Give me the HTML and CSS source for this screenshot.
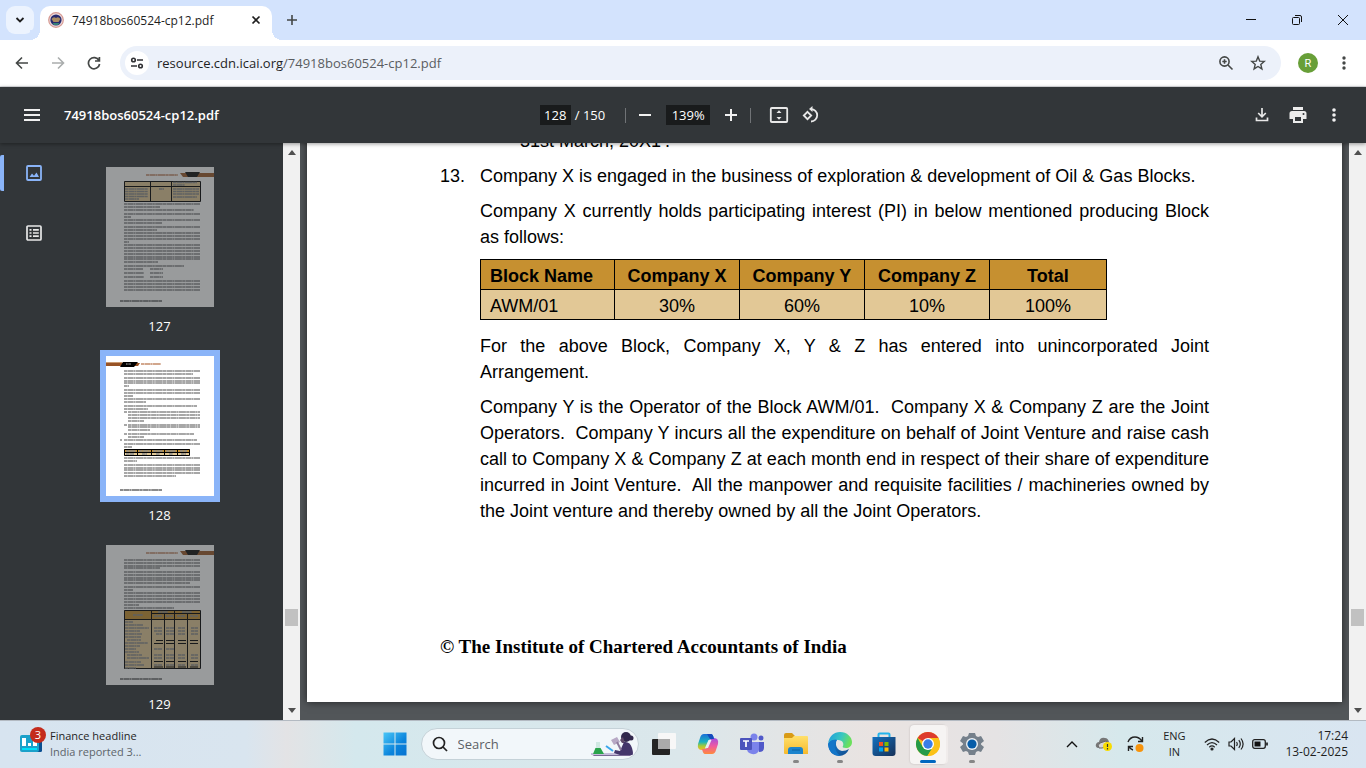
FILE: index.html
```html
<!DOCTYPE html>
<html lang="en">
<head>
    <meta charset="UTF-8">
    <meta name="viewport" content="width=device-width, initial-scale=1.0">
    <title>74918bos60524-cp12.pdf</title>
    <link rel="stylesheet" href="styles.css">
</head>
<body>

    <!-- Tab strip -->
    <header class="tab-strip">
        <button class="tab-search" aria-label="Search tabs">
            <svg width="10" height="10" viewBox="0 0 10 10"><path d="M1.500 3L5 6.500L8.500 3" fill="none" stroke="#1f1f1f" stroke-width="1.800"/></svg>
        </button>
        <div class="tab">
            <svg width="16" height="16" viewBox="0 0 16 16">
                <circle cx="8" cy="8" r="7.300" fill="#ead9dc" stroke="#d79a92" stroke-width="1.200"/>
                <circle cx="8" cy="8" r="5.600" fill="#26296e"/>
                <path d="M3.500 7q2-3 4.500-1q2.500-2 4.500 1l-2 3H5.500z" fill="#a98b62"/>
                <path d="M4.500 11h7l-1.500 2h-4z" fill="#358078"/>
            </svg>
            <span class="tab-title">74918bos60524-cp12.pdf</span>
            <button class="icon-btn" aria-label="Close tab">
                <svg width="10" height="10" viewBox="0 0 10 10"><path d="M1.500 1.500l7 7M8.500 1.500l-7 7" stroke="#1f1f1f" stroke-width="1.700"/></svg>
            </button>
        </div>
        <button class="icon-btn new-tab" aria-label="New tab">
            <svg width="12" height="12" viewBox="0 0 12 12"><path d="M6 1v10M1 6h10" stroke="#444746" stroke-width="1.600"/></svg>
        </button>
        <div class="window-buttons">
            <button aria-label="Minimize"><svg width="12" height="12" viewBox="0 0 12 12"><path d="M1 5.500h10" stroke="#111"/></svg></button>
            <button aria-label="Restore"><svg width="12" height="12" viewBox="0 0 12 12" fill="none" stroke="#111"><rect x="1.500" y="3.500" width="7" height="7" rx="1"/><path d="M4 1.500h5q1.500 0 1.500 1.500v5"/></svg></button>
            <button aria-label="Close"><svg width="12" height="12" viewBox="0 0 12 12"><path d="M1 1l10 10M11 1L1 11" stroke="#111"/></svg></button>
        </div>
    </header>

    <!-- Address bar -->
    <div class="nav-bar">
        <button class="icon-btn" aria-label="Back"><svg width="14" height="14" viewBox="0 0 14 14" fill="none" stroke="#444746" stroke-width="1.600"><path d="M13 7H2M7 1.500L1.500 7L7 12.500"/></svg></button>
        <button class="icon-btn" aria-label="Forward"><svg width="14" height="14" viewBox="0 0 14 14" fill="none" stroke="#aaadad" stroke-width="1.600"><path d="M1 7h11M7 1.500L12.500 7L7 12.500"/></svg></button>
        <button class="icon-btn" aria-label="Reload"><svg width="14" height="14" viewBox="0 0 14 14" fill="none" stroke="#444746" stroke-width="1.700"><path d="M12 4.500A5.600 5.600 0 1 0 12.600 8M12.400 1v4H8"/></svg></button>
        <div class="omnibox">
            <button class="site-info" aria-label="View site information">
                <svg width="14" height="12" viewBox="0 0 14 12" fill="none" stroke="#303134" stroke-width="1.600"><circle cx="3.500" cy="3" r="1.800"/><path d="M7 3h6M1 9h6"/><circle cx="10.500" cy="9" r="1.800"/></svg>
            </button>
            <a class="url" href="#">resource.cdn.icai.org<span>/74918bos60524-cp12.pdf</span></a>
            <button class="icon-btn" aria-label="Zoom"><svg width="16" height="16" viewBox="0 0 16 16" fill="none" stroke="#444746" stroke-width="1.600"><circle cx="6.500" cy="6.500" r="4.600"/><path d="M10 10l4.500 4.500M6.500 4.300v4.400M4.300 6.500h4.400"/></svg></button>
            <button class="icon-btn" aria-label="Bookmark"><svg width="16" height="16" viewBox="0 0 16 16" fill="none" stroke="#444746" stroke-width="1.400"><path d="M8 1.800l1.700 4.300 4.600.3-3.500 3 1.100 4.500L8 11.500l-3.900 2.400 1.100-4.500-3.500-3 4.600-.3z"/></svg></button>
        </div>
        <button class="avatar" aria-label="Profile">R</button>
        <button class="icon-btn" aria-label="Menu"><svg width="4" height="16" viewBox="0 0 4 16" fill="#444746"><circle cx="2" cy="3" r="1.700"/><circle cx="2" cy="8" r="1.700"/><circle cx="2" cy="13" r="1.700"/></svg></button>
    </div>

    <!-- PDF toolbar -->
    <div class="pdf-toolbar">
        <div class="pdf-name">
            <button class="icon-btn" aria-label="Toggle sidebar"><svg width="16" height="12" viewBox="0 0 16 12"><path d="M0 1h16M0 6h16M0 11h16" stroke="#f1f1f1" stroke-width="2"/></svg></button>
            <span>74918bos60524-cp12.pdf</span>
        </div>
        <div class="pdf-controls">
            <input class="page-input" aria-label="Page number" value="128">
            <span class="page-total">/ 150</span>
            <span class="separator"></span>
            <button class="icon-btn" aria-label="Zoom out"><svg width="12" height="12" viewBox="0 0 12 12"><path d="M0 6h12" stroke="#f1f1f1" stroke-width="2"/></svg></button>
            <input class="zoom-input" aria-label="Zoom level" value="139%">
            <button class="icon-btn" aria-label="Zoom in"><svg width="12" height="12" viewBox="0 0 12 12"><path d="M0 6h12M6 0v12" stroke="#f1f1f1" stroke-width="2"/></svg></button>
            <span class="separator"></span>
            <button class="icon-btn" aria-label="Fit to page"><svg width="20" height="16" viewBox="0 0 20 16"><rect x="1.800" y="1" width="16.400" height="14" rx="1" fill="none" stroke="#e8e8e8" stroke-width="1.800"/><path d="M7.500 6L10 3.200L12.500 6zM7.500 10L10 12.800L12.500 10z" fill="#e8e8e8"/><path d="M10 5v1M10 10v1" stroke="#e8e8e8" stroke-width="2"/></svg></button>
            <button class="icon-btn" aria-label="Rotate"><svg width="18" height="18" viewBox="0 0 18 18" fill="none" stroke="#e8e8e8" stroke-width="1.800"><path d="M5.500 5.800l3.700 3.700-3.700 3.700-3.700-3.700zM9 3.100a6.200 6.200 0 1 1 0 12.400"/><path d="M10.500 0v6L7 3z" fill="#e8e8e8" stroke="none"/></svg></button>
        </div>
        <div class="pdf-actions">
            <button class="icon-btn" aria-label="Download"><svg width="14" height="14" viewBox="0 0 14 14" fill="none" stroke="#e8e8e8" stroke-width="1.700"><path d="M7 0v8.500M3.200 5L7 8.800L10.800 5M1.500 9.500v3h11v-3"/></svg></button>
            <button class="icon-btn" aria-label="Print"><svg width="18" height="16" viewBox="0 0 18 16"><path d="M4 0h10v3H4zM3 4h12q2.500 0 2.500 2.500V12H14v4H4v-4H.5V6.500Q.5 4 3 4zM6 10v4h6v-4z" fill="#ececec" fill-rule="evenodd"/><circle cx="14.500" cy="7" r="1" fill="#323639"/></svg></button>
            <button class="icon-btn" aria-label="More actions"><svg width="4" height="16" viewBox="0 0 4 16" fill="#f1f1f1"><circle cx="2" cy="3" r="1.800"/><circle cx="2" cy="8" r="1.800"/><circle cx="2" cy="13" r="1.800"/></svg></button>
        </div>
    </div>

    <main class="pdf-body">
        <aside class="sidebar">
            <nav class="rail">
                <button class="rail-btn active" aria-label="Thumbnails"><svg width="16" height="16" viewBox="0 0 16 16"><rect x="1" y="1" width="14" height="14" rx="1" fill="none" stroke="#8ab4f8" stroke-width="1.800"/><path d="M3.500 12l2.500-3.500 2 2.300L10.500 7.500l2.500 4.500z" fill="#8ab4f8"/></svg></button>
                <button class="rail-btn" aria-label="Document outline"><svg width="16" height="16" viewBox="0 0 16 16" fill="none" stroke="#e8e8e8" stroke-width="1.700"><rect x="1" y="1" width="14" height="14" rx="1"/><path d="M3.500 4.800h2M7 4.800h5.800M3.500 8h2M7 8h5.800M3.500 11.200h2M7 11.200h5.800"/></svg></button>
            </nav>
            <div class="thumbs">
                <button class="thumb">
                    <svg class="thumb-page" width="108" height="140" viewBox="0 0 108 140">
                        <rect width="108" height="140" fill="#fff"/>
                        <path d="M74 6h34v4H77z" fill="#9d5b2b"/><path d="M79 5h15l-3 5H82z" fill="#111"/>
                        <path class="brown-text" d="M40 8h32"/>
                        <path d="M18 14h76v20H18z" fill="#e2c896"/>
                        <path d="M18.500 14.500h76v20h-76zM18.500 19.500h76M44.500 14v20M65.500 14v20" fill="none" stroke="#000"/>
                        <path class="mini-text" d="M19 22h23M19 24.500h23M19 27h23M19 29.500h23M19 32h14M53 22h5M67 15.500h24M67 18h12M67 22h26M67 24.500h26M67 27h26M67 30h24M18 37h76M18 40h36M18 43h70M18 47h76M18 50h7M18 53h76M18 56h38M18 60h76M18 63h33M18 66h76M18 69h76M18 72h76M18 75h5M18 78h76M18 81h76M18 84h76M18 87h76M18 90h76M18 92h76M18 95h34M18 99h60M18 102h19M44 102h13M18 106h20M44 106h13M18 110h20M44 110h13M18 114h76M18 117h76M18 120h76M18 123h76"/>
                        <path class="foot-text" d="M14 134h42"/>
                    </svg>
                    <span>127</span>
                </button>
                <button class="thumb selected">
                    <svg class="thumb-page" width="108" height="140" viewBox="0 0 108 140">
                        <rect width="108" height="140" fill="#fff"/>
                        <path d="M0 7h34l-2 3H0z" fill="#985326"/><path d="M0 6h17l-1 1H0z" fill="#c99a72"/><path d="M17 6h15l-4 5H14z" fill="#000"/><path d="M20 8h5" stroke="#bbb" stroke-dasharray="1 .4"/>
                        <path class="brown-text" d="M35 8h20"/>
                        <path class="mini-text" d="M18 15h76M18 18h69M18 22h76M18 25h76M18 27h76M18 30h5M18 34h76M18 37h76M18 40h9M18 43h76M18 46h22M18 50h73M18 53h24M18 56h3M22 56h72M22 59h72M22 62h72M22 65h16M18 69h3M22 69h72M22 71h72M22 74h22M18 78h3M22 78h66M22 81h16M14 84h2M18 84h73M18 88h76M18 91h8M18 102h76M18 105h13M18 109h76M18 112h76M18 114h76M18 117h76M18 120h52"/>
                        <path d="M18 93h66v7H18z" fill="#e2c896"/><path d="M18 93h66v4H18z" fill="#c69030"/>
                        <path class="mini-text" d="M20 95h10M33 95h11M47 95h10M60 95h10M74 95h7M20 98h8M36 98h5M50 98h4M63 98h4M75 98h5"/>
                        <path d="M18.500 93.500h65v6h-65zM18 96.500h66M31.500 93v7M45.500 93v7M58.500 93v7M71.500 93v7" fill="none" stroke="#000"/>
                        <path class="foot-text" d="M14 134h42"/>
                    </svg>
                    <span>128</span>
                </button>
                <button class="thumb">
                    <svg class="thumb-page" width="108" height="140" viewBox="0 0 108 140">
                        <rect width="108" height="140" fill="#fff"/>
                        <path d="M74 6h34v4H77z" fill="#9d5b2b"/><path d="M79 5h15l-3 5H82z" fill="#111"/>
                        <path class="brown-text" d="M40 8h32"/>
                        <path class="mini-text" d="M18 15h76M18 18h76M18 21h76M18 23h36M18 27h76M18 30h76M18 33h76M18 35h76M18 38h66M18 42h76M18 45h9M18 48h76M18 51h76M18 54h76M18 57h76M18 60h15M18 63h50"/>
                        <path d="M18 65h76v59H18z" fill="#e2c896"/><path d="M18 65h76v9H18z" fill="#c69030"/>
                        <path d="M18.500 65.500h76v58h-76zM18 74.500h76M45.500 65v59M58.500 68v56M68.500 65v59M81.500 68v56M46 68.500h48" fill="none" stroke="#000"/>
                        <path class="mini-text" d="M27 70h10M52 67h10M76 67h10M48 71h8M60 71h7M71 71h8M84 71h8M19 77h8M19 80h18M19 83h24M19 86h15M19 89h17M19 92h16M21 95h14M19 98h23M19 101h15M19 104h11M19 107h14M21 110h15M21 113h22M19 117h16M19 120h19M19 123h11M48 83h8M60 83h8M72 83h7M85 83h7M48 86h8M60 86h8M72 86h7M85 86h7M50 89h6M60 89h8M72 89h7M85 89h7M48 104h8M60 104h8M48 110h8M60 110h8M72 110h7M85 110h7M48 113h8M60 113h8M72 113h7M85 113h7M48 120h8M60 120h8M72 120h7M85 120h7"/>
                        <path d="M50 95.500h7M60 95.500h8M72 95.500h8M84 95.500h8M48 98.500h9M60 98.500h8M72 98.500h8M84 98.500h8M48 116.500h9M60 116.500h8M72 116.500h8M84 116.500h8M48 122h9M60 122h8M72 122h8M84 122h8" stroke="#000" stroke-width="1.200"/>
                        <path class="foot-text" d="M14 134h42"/>
                    </svg>
                    <span>129</span>
                </button>
            </div>
            <div class="scrollbar">
                <svg width="8" height="5" viewBox="0 0 8 5"><path d="M0 5L4 0L8 5z" fill="#505050"/></svg>
                <span class="scroll-thumb"></span>
                <svg width="8" height="5" viewBox="0 0 8 5"><path d="M0 0L4 5L8 0z" fill="#505050"/></svg>
            </div>
        </aside>

        <section class="viewer">
            <article class="page">
                <p class="above">31st March, 20X1&rsquo;.</p>
                <div class="question">
                    <span>13.</span>
                    <div class="question-text">
                        <p>Company X is engaged in the business of exploration &amp; development of Oil &amp; Gas Blocks.</p>
                        <p>
                            <span class="line">Company X currently holds participating interest (PI) in below mentioned producing Block</span>
                            <span class="line last">as follows:</span>
                        </p>
                        <table>
                            <thead>
                                <tr><th class="name">Block Name</th><th>Company X</th><th>Company Y</th><th>Company Z</th><th class="total">Total</th></tr>
                            </thead>
                            <tbody>
                                <tr><td class="name">AWM/01</td><td>30%</td><td>60%</td><td>10%</td><td>100%</td></tr>
                            </tbody>
                        </table>
                        <p>
                            <span class="line">For the above Block, Company X, Y &amp; Z has entered into unincorporated Joint</span>
                            <span class="line last">Arrangement.</span>
                        </p>
                        <p>
                            <span class="line">Company Y is the Operator of the Block AWM/01.&nbsp; Company X &amp; Company Z are the Joint</span>
                            <span class="line">Operators.&nbsp; Company Y incurs all the expenditure on behalf of Joint Venture and raise cash</span>
                            <span class="line">call to Company X &amp; Company Z at each month end in respect of their share of expenditure</span>
                            <span class="line">incurred in Joint Venture.&nbsp; All the manpower and requisite facilities / machineries owned by</span>
                            <span class="line last">the Joint venture and thereby owned by all the Joint Operators.</span>
                        </p>
                    </div>
                </div>
                <footer>&copy; The Institute of Chartered Accountants of India</footer>
            </article>
        </section>
        <div class="scrollbar">
            <svg width="8" height="5" viewBox="0 0 8 5"><path d="M0 5L4 0L8 5z" fill="#505050"/></svg>
            <span class="scroll-thumb"></span>
            <svg width="8" height="5" viewBox="0 0 8 5"><path d="M0 0L4 5L8 0z" fill="#505050"/></svg>
        </div>
    </main>

    <!-- Taskbar -->
    <div class="taskbar">
        <button class="widget">
            <span class="widget-icon">
                <svg width="22" height="18" viewBox="0 0 22 18"><rect x="10" y="2" width="12" height="15" rx="1.500" fill="#094f91"/><rect width="19" height="17" rx="2" fill="#1ba1ca"/><path d="M2 3h4v8H2zM8 8h3v3H8zM13 5h4v6h-4z" fill="#fff"/><path d="M2 13h15v2H2z" fill="#00e0fa"/></svg>
                <span class="badge">3</span>
            </span>
            <span class="widget-text">Finance headline<small>India reported 3...</small></span>
        </button>

        <div class="apps">
            <button class="app" aria-label="Start"><svg width="24" height="24" viewBox="0 0 24 24"><defs><linearGradient id="win" x1="0" y1="0" x2="24" y2="24" gradientUnits="userSpaceOnUse"><stop offset="0" stop-color="#4cc9f8"/><stop offset=".6" stop-color="#0a84dc"/><stop offset="1" stop-color="#0671d0"/></linearGradient></defs><path d="M.5.5h11v11H.5zM12.500.5h11v11h-11zM.5 12.500h11v11H.5zM12.500 12.500h11v11h-11z" fill="url(#win)"/></svg></button>
            <label class="search">
                <svg width="16" height="16" viewBox="0 0 16 16" fill="none" stroke="#222" stroke-width="1.700"><circle cx="7" cy="7" r="5.500"/><path d="M11 11l4 4"/></svg>
                <input type="text" placeholder="Search" aria-label="Search">
                <svg width="44" height="26" viewBox="0 0 44 26">
                    <path d="M1 23h42l-3 2H4z" fill="#7a6a95"/><path d="M1 22h31v2H1z" fill="#c5bcda"/>
                    <path d="M6 11h4v5l4 7H3l3-7z" fill="#d0e8e2"/><path d="M5.500 17h5l3.500 6H3z" fill="#2aa34b"/>
                    <path d="M16 15l7 5" stroke="#38a6ec" stroke-width="2"/>
                    <circle cx="36" cy="6" r="5" fill="#33294d"/><circle cx="41" cy="7" r="2.500" fill="#33294d"/>
                    <path d="M33 6l-3 3 2 3h3z" fill="#604a6a"/>
                    <path d="M34 11q6-1 8 6t0 7H30l-6-2 1-3 5 1z" fill="#44366a"/>
                    <path d="M21 9l6-3 3 5-6 3z" fill="#b7a9c5"/><path d="M27 11l4 8" stroke="#8d7c9d" stroke-width="2"/>
                </svg>
            </label>
            <button class="app" aria-label="Task view"><svg width="24" height="22" viewBox="0 0 24 22"><rect x="0" y="6" width="18" height="16" rx="1" fill="#242424"/><rect x="6" y="0" width="18" height="16" rx="1" fill="#f7f7f7"/><path d="M6 6h12v10H6z" fill="#aaa"/></svg></button>
            <button class="app" aria-label="Copilot">
                <svg width="22" height="22" viewBox="0 0 22 22">
                    <defs>
                        <linearGradient id="cp1" x1="0" y1="0" x2="0" y2="1"><stop offset="0" stop-color="#1b6fd8"/><stop offset=".5" stop-color="#1cb3bd"/><stop offset=".75" stop-color="#a7cb36"/><stop offset="1" stop-color="#f7b52a"/></linearGradient>
                        <linearGradient id="cp2" x1="0" y1="0" x2="0" y2="1"><stop offset="0" stop-color="#a14ee0"/><stop offset=".5" stop-color="#ef5aa1"/><stop offset="1" stop-color="#ff8a3c"/></linearGradient>
                    </defs>
                    <path d="M7 1h7q2 0 3 5h-3q-2 0-3 3l-2 6q-1 2-4 2-5 0-4-6l2-6q1-4 4-4z" fill="url(#cp1)"/>
                    <path d="M15 21H8q-2 0-3-5h3q2 0 3-3l2-6q1-2 4-2 5 0 4 6l-2 6q-1 4-4 4z" fill="url(#cp2)"/>
                    <path d="M11.500 7h3l-3.500 8H8z" fill="#e8eef2"/>
                    <path d="M10 1h4q2 0 3 5h-4z" fill="#154bbc"/>
                </svg>
            </button>
            <button class="app" aria-label="Teams">
                <svg width="24" height="22" viewBox="0 0 24 22"><circle cx="14" cy="4" r="3.500" fill="#7b83eb"/><circle cx="21" cy="5" r="2.500" fill="#5059c9"/><path d="M16 9h8v6q0 4-5 4z" fill="#5059c9"/><path d="M9 9h10v6q0 7-7 6-5-1-5-5z" fill="#7b83eb"/><rect x="0" y="5" width="12" height="12" rx="1" fill="#4b53bc"/><path d="M3 8h6M6 8v6" stroke="#fff" stroke-width="1.700"/></svg>
            </button>
            <button class="app running" aria-label="File Explorer">
                <svg width="24" height="22" viewBox="0 0 24 22"><defs><linearGradient id="fe" x1="0" y1="0" x2="0" y2="1"><stop offset="0" stop-color="#ffe06b"/><stop offset="1" stop-color="#f6b92c"/></linearGradient></defs><path d="M0 2q0-2 2-2h6l3 3h11v6H0z" fill="#d99b16"/><path d="M0 5h8l2-2h13q1 0 1 1v17H1q-1 0-1-1z" fill="url(#fe)"/><path d="M4 21v-4q0-3 3-3h9q3 0 3 3v4z" fill="#1b84cd"/><path d="M8 17h8" stroke="#0c61a0"/></svg>
            </button>
            <button class="app running" aria-label="Edge">
                <svg width="24" height="24" viewBox="0 0 24 24">
                    <defs>
                        <linearGradient id="ed1" x1="0" y1="0" x2="1" y2=".3"><stop offset="0" stop-color="#1d9be0"/><stop offset=".6" stop-color="#39c7c0"/><stop offset="1" stop-color="#6be05c"/></linearGradient>
                        <linearGradient id="ed2" x1="0" y1="0" x2="1" y2="1"><stop offset="0" stop-color="#1683d8"/><stop offset="1" stop-color="#114a8b"/></linearGradient>
                    </defs>
                    <path d="M0 12q3-6 9-5-1 2-1 6 1 5 6 6 4 0 7-2Q18 24 11 24 1 23 0 12z" fill="url(#ed2)"/>
                    <path d="M0 12C1 4 6 0 12 0c7 0 12 5 12 10 0 4-3 6-6 6-3 0-4-1-3-2 1-2 0-6-5-6-5-1-9 1-10 4z" fill="url(#ed1)"/>
                    <path d="M0 12q3-5 9-4-3 3-2 8 1 5 6 8Q1 24 0 12z" fill="#1375c8"/>
                </svg>
            </button>
            <button class="app" aria-label="Microsoft Store">
                <svg width="24" height="24" viewBox="0 0 24 24"><path d="M6.500 6V2.500q0-1 1-1h9q1 0 1 1V6" fill="none" stroke="#22b4ec" stroke-width="2"/><defs><linearGradient id="ms" x1="0" y1="0" x2="1" y2="1"><stop offset="0" stop-color="#1271c0"/><stop offset="1" stop-color="#173057"/></linearGradient></defs><path d="M.5 5h23v16q0 3-3 3h-17q-3 0-3-3z" fill="url(#ms)"/><path d="M7 10h4v4H7z" fill="#f25022"/><path d="M12.500 10h4v4h-4z" fill="#7fba00"/><path d="M7 15.500h4v4H7z" fill="#00a4ef"/><path d="M12.500 15.500h4v4h-4z" fill="#ffb900"/></svg>
            </button>
            <button class="app running current" aria-label="Chrome">
                <svg width="24" height="24" viewBox="0 0 24 24"><circle cx="12" cy="12" r="12" fill="#fbc116"/><path d="M12 12L1.600 6a12 12 0 0 1 20.800 0L22.400 6.500z" fill="#dd3b2d"/><path d="M1.600 6a12 12 0 0 0 9.800 18l5.800-9.500L12 12 6.800 15z" fill="#259b49"/><path d="M12 6h10.400q1.600 3 1.600 6a12 12 0 0 1-12.600 12l5.800-9z" fill="#fbc116"/><circle cx="12" cy="12" r="6" fill="#fff"/><circle cx="12" cy="12" r="4.700" fill="#397ee8"/></svg>
            </button>
            <button class="app running" aria-label="Settings">
                <svg width="24" height="24" viewBox="0 0 24 24"><path d="M9 1h6l1 3 2 1 3-1 3 5-3 2.500v1L24 15l-3 5-3-1-2 1-1 3H9l-1-3-2-1-3 1-3-5 3-2.500v-1L0 9l3-5 3 1 2-1z" fill="#75808b"/><circle cx="12" cy="12" r="6" fill="#eef1f4"/><circle cx="12" cy="12" r="4.600" fill="#075da8"/></svg>
            </button>
        </div>

        <div class="tray">
            <button class="icon-btn" aria-label="Show hidden icons"><svg width="12" height="8" viewBox="0 0 12 8"><path d="M1 7l5-5 5 5" fill="none" stroke="#111" stroke-width="1.400"/></svg></button>
            <button class="icon-btn" aria-label="OneDrive"><svg width="18" height="16" viewBox="0 0 18 16"><path d="M3 12q-3-1-2-4 1-2 3-2 1-5 6-4 3 0 4 4z" fill="#777"/><path d="M4 12q-2-3 1-5l6-2 3 5-7 2z" fill="#d5d5d5" stroke="#666"/><circle cx="12.500" cy="10.500" r="4.500" fill="#f8dc00"/><path d="M12.500 8v3M12.500 12v1.500" stroke="#333" stroke-width="1.200"/></svg></button>
            <button class="icon-btn" aria-label="Windows Update"><svg width="18" height="18" viewBox="0 0 18 18"><path d="M1 7q2-5 7-5 4 0 7 4M15.500 2v4.500H11M6 15Q3 14 2 11.500M1.500 16v-4.500H6" fill="none" stroke="#222" stroke-width="1.400"/><circle cx="12.500" cy="13" r="4" fill="#f7930b"/></svg></button>
            <button class="lang">ENG<br>IN</button>
            <button class="system" aria-label="Network, volume and battery">
                <svg width="16" height="14" viewBox="0 0 16 14" fill="none" stroke="#222" stroke-width="1.200"><path d="M.8 5.500q7.200-7 14.400 0M3 8q5-4.800 10 0M5.300 10.200q2.700-2.500 5.400 0"/><circle cx="8" cy="12" r="1" fill="#222"/></svg>
                <svg width="16" height="14" viewBox="0 0 16 14" fill="none" stroke="#222" stroke-width="1.200"><path d="M1 5h2l3.500-3.500v11L3 9H1zM8.500 5q1.500 2 0 4M10.800 3.200q3 3.800 0 7.600M13 1.500q4.200 5.500 0 11"/></svg>
                <svg width="16" height="10" viewBox="0 0 16 10"><rect x=".7" y=".7" width="12.600" height="8.600" rx="2" fill="none" stroke="#222" stroke-width="1.300"/><path d="M2.500 2.500h6v5h-6z" fill="#111"/><path d="M15 3.500v3" stroke="#111" stroke-width="1.600"/></svg>
            </button>
            <button class="clock">17:24<br>13-02-2025</button>
        </div>
    </div>

</body>
</html>
```
FILE: styles.css
```css
:root {
    --tab-strip: #d3e3fd;
    --omnibox: #ecf1fa;
    --pdf-bar: #323639;
    --pdf-back: #525659;
    --accent: #8ab4f8;
}

* {
    box-sizing: border-box;
}

body {
    font-family: "Open Sans", "Noto Sans", sans-serif;
    font-size: 12px;
    color: #1f1f1f;
    margin: 0;
    height: 100vh;
    display: flex;
    flex-direction: column;
    overflow: hidden;
}

button {
    font: inherit;
    color: inherit;
    background: none;
    border: none;
    padding: 0;
    display: flex;
    align-items: center;
    justify-content: center;
    cursor: pointer;
}

svg {
    display: block;
    flex: none;
}

.icon-btn {
    width: 36px;
    height: 32px;
    flex: none;
}

/* Tab strip */
.tab-strip {
    height: 40px;
    flex: none;
    display: flex;
    align-items: center;
    padding-left: 6px;
    background: var(--tab-strip);
}

.tab-search {
    width: 28px;
    height: 28px;
    border-radius: 9px;
    background: #ecf3fe;
}

.tab {
    display: flex;
    align-items: center;
    align-self: flex-end;
    gap: 8px;
    width: 232px;
    height: 34px;
    margin-left: 6px;
    padding: 0 0 6px 8px;
    background: #fff;
    border-radius: 10px 10px 0 0;
    position: relative;
}

/* flared feet of the active tab */
.tab::before,
.tab::after {
    content: "";
    position: absolute;
    bottom: 0;
    width: 10px;
    height: 10px;
}

.tab::before {
    left: -10px;
    background: radial-gradient(circle at 0 0, var(--tab-strip) 10px, #fff 10px);
}

.tab::after {
    right: -10px;
    background: radial-gradient(circle at 100% 0, var(--tab-strip) 10px, #fff 10px);
}

.tab-title {
    flex: 1;
}

.tab .icon-btn {
    width: 32px;
}

.new-tab {
    width: 40px;
}

.window-buttons {
    display: flex;
    margin-left: auto;
}

.window-buttons button {
    width: 46px;
    height: 40px;
}

/* Address bar */
.nav-bar {
    height: 47px;
    flex: none;
    display: flex;
    align-items: center;
    padding: 0 4px;
    border-bottom: 1px solid #dfe1e4;
    background: #fff;
}

.omnibox {
    flex: 1;
    display: flex;
    align-items: center;
    height: 34px;
    margin: 0 15px 0 8px;
    padding: 0 7px 0 5px;
    border-radius: 17px;
    background: var(--omnibox);
}

.site-info {
    width: 24px;
    height: 24px;
    border-radius: 50%;
    background: #fff;
}

.url {
    flex: 1;
    margin-left: 8px;
    font-size: 13px;
    color: #1f1f1f;
    text-decoration: none;
}

.url span {
    color: #5a5d61;
}

.omnibox .icon-btn {
    width: 32px;
}

.avatar {
    width: 20px;
    height: 20px;
    margin: 0 8px 0 2px;
    border-radius: 50%;
    background: #689f38;
    color: #fff;
    font-family: Roboto, sans-serif;
    font-size: 11px;
}

/* PDF toolbar */
.pdf-toolbar {
    height: 56px;
    flex: none;
    display: grid;
    grid-template-columns: 1fr auto 1fr;
    align-items: center;
    padding: 0 14px;
    background: var(--pdf-bar);
    color: #fff;
    box-shadow: 0 1px 4px rgba(0, 0, 0, 0.4);
    position: relative;
    z-index: 1;
}

.pdf-name {
    display: flex;
    align-items: center;
    gap: 14px;
    font-size: 13px;
    font-weight: 600;
}

.pdf-controls {
    display: flex;
    align-items: center;
    padding-right: 2px;
    font-size: 13px;
}

.pdf-controls input {
    height: 20px;
    padding: 0;
    border: none;
    background: #191b1c;
    color: #fff;
    font: inherit;
    text-align: center;
}

.page-input {
    width: 31px;
}

.zoom-input {
    width: 44px;
    margin: 0 2px;
}

.page-total {
    margin-left: 4px;
}

.pdf-controls .separator {
    width: 1px;
    height: 15px;
    background: #707376;
    margin-left: 20px;
}

.pdf-controls .icon-btn {
    width: 38px;
}

.pdf-controls .zoom-input + .icon-btn + .separator {
    margin-left: 0;
}

.pdf-controls .separator:last-of-type {
    margin-right: 9px;
}

.pdf-controls .icon-btn:last-child {
    width: 26px;
}

.pdf-actions {
    display: flex;
    justify-content: flex-end;
}

/* Document area */
.pdf-body {
    flex: 1;
    min-height: 0;
    display: flex;
    background: var(--pdf-back);
}

.sidebar {
    width: 300px;
    flex: none;
    display: flex;
    background: var(--pdf-bar);
    color: #fff;
}

.rail {
    width: 64px;
    padding-top: 12px;
    display: flex;
    flex-direction: column;
    gap: 24px;
}

.rail-btn {
    height: 36px;
    border-left: 4px solid transparent;
}

.rail-btn.active {
    border-left-color: var(--accent);
    border-radius: 2px;
}

.thumbs {
    flex: 1;
    display: flex;
    flex-direction: column;
    align-items: center;
    gap: 15px;
    padding: 18px 28px 0 0;
    overflow: hidden;
}

.thumb {
    flex: none;
    flex-direction: column;
    gap: 4px;
    font-size: 13px;
    line-height: 18px;
}

.thumb-page {
    opacity: 0.5;
    margin: 6px;
}

.thumb.selected .thumb-page {
    opacity: 1;
    margin: 0;
    border: 6px solid var(--accent);
    width: 120px;
    height: 152px;
}

.mini-text,
.foot-text,
.brown-text {
    fill: none;
    stroke: #8a8a8a;
    stroke-width: 1.5;
    stroke-dasharray: 3.3 0.4 5.6 0.3 1.8 0.4 7.3 0.3;
}

.foot-text {
    stroke: #666;
}

.brown-text {
    stroke: #c48a68;
}

.scrollbar {
    width: 17px;
    flex: none;
    display: flex;
    flex-direction: column;
    align-items: center;
    padding: 7px 0;
    background: #f1f1f1;
}

.scroll-thumb {
    width: 13px;
    height: 17px;
    margin: auto 0 82px;
    background: #c1c1c1;
}

.viewer {
    flex: 1;
    min-width: 0;
    display: flex;
    flex-direction: column;
    justify-content: flex-end;
    padding: 0 7px 18px;
    overflow: hidden;
}

.page {
    flex: none;
    padding: 40px 133px 42px;
    background: #fff;
    color: #000;
    font-family: "Liberation Sans", Arial, sans-serif;
    font-size: 18px;
    line-height: 26px;
    box-shadow: 0 0 8px rgba(0, 0, 0, 0.6);
}

.page p {
    margin: 0 0 9px;
}

.page .above {
    padding-left: 80px;
}

.question {
    display: flex;
}

.question > span {
    width: 40px;
    flex: none;
}

.question-text {
    flex: 1;
    min-width: 0;
}

.line {
    display: block;
    text-align-last: justify;
}

.line.last {
    text-align-last: left;
}

.page table {
    width: 86%;
    margin-bottom: 13px;
    border-collapse: collapse;
    table-layout: fixed;
    text-align: center;
}

.page th,
.page td {
    height: 30px;
    padding: 2px 0 0;
    border: 1px solid #000;
    background: #e2c896;
}

.page th {
    background: #c69030;
}

.page .name {
    width: 134px;
    padding-left: 9px;
    text-align: left;
}

.page .total {
    width: 117px;
}

.page footer {
    margin-top: 101px;
    font-family: "Liberation Serif", "Times New Roman", serif;
    font-size: 19px;
    font-weight: bold;
}

/* Taskbar */
.taskbar {
    height: 48px;
    flex: none;
    display: grid;
    grid-template-columns: 1fr auto 1fr;
    align-items: center;
    padding-bottom: 2px;
    border-top: 1px solid #b3bac2;
    background: linear-gradient(90deg, #d7e4f0 0%, #d9e5ef 18%, #e3e3e5 21%, #d4e8ed 26%, #dbe7eb 50%, #e9e3e1 64%, #e5e3e4 73%, #d6e8ec 82%, #d9e5f1 100%);
}

.widget {
    justify-self: start;
    padding-left: 20px;
    gap: 8px;
    text-align: left;
}

.widget-icon {
    position: relative;
}

.badge {
    position: absolute;
    top: -8px;
    right: -4px;
    width: 16px;
    height: 16px;
    border-radius: 50%;
    background: #c42b1c;
    color: #fff;
    font-size: 11px;
    line-height: 16px;
    text-align: center;
}

.widget-text {
    font-size: 11px;
    line-height: 16px;
}

.widget-text small {
    display: block;
    font-size: 11px;
    color: #5d646b;
}

.apps {
    display: flex;
    align-items: center;
}

.app {
    position: relative;
    width: 44px;
    height: 44px;
}

.search {
    display: flex;
    align-items: center;
    width: 218px;
    height: 32px;
    margin: 0 3px 0 4px;
    padding: 0 4px 0 10px;
    border: 1px solid #c5d2d8;
    border-radius: 16px;
    background: #f2f7fa;
}

.search input {
    flex: 1;
    min-width: 0;
    padding: 0 0 0 10px;
    border: none;
    outline: none;
    background: none;
    font: inherit;
    font-size: 13px;
}

.search input::placeholder {
    color: #5c6166;
}

.app.running::after {
    content: "";
    position: absolute;
    bottom: 3px;
    left: 50%;
    width: 6px;
    height: 3px;
    border-radius: 2px;
    background: #868686;
    transform: translateX(-50%);
}

.app.current::before {
    content: "";
    position: absolute;
    inset: 3px 4px 2px;
    z-index: -1;
    border-radius: 4px;
    background: #f6f4f3;
    box-shadow: 2px 0 0 #f0eceb, 0 0 2px #b9b4b3;
}

.app.current {
    z-index: 0;
}

.app.current::after {
    width: 16px;
    background: #0067c0;
}

.tray {
    display: flex;
    align-items: center;
    justify-content: flex-end;
    padding-right: 18px;
    line-height: 16px;
    font-size: 11px;
}

.tray .icon-btn {
    width: 32px;
}

.lang {
    width: 44px;
    text-align: center;
}

.system {
    gap: 8px;
    margin: 0 17px 0 8px;
}

.clock {
    font-size: 12px;
    text-align: right;
}
```
